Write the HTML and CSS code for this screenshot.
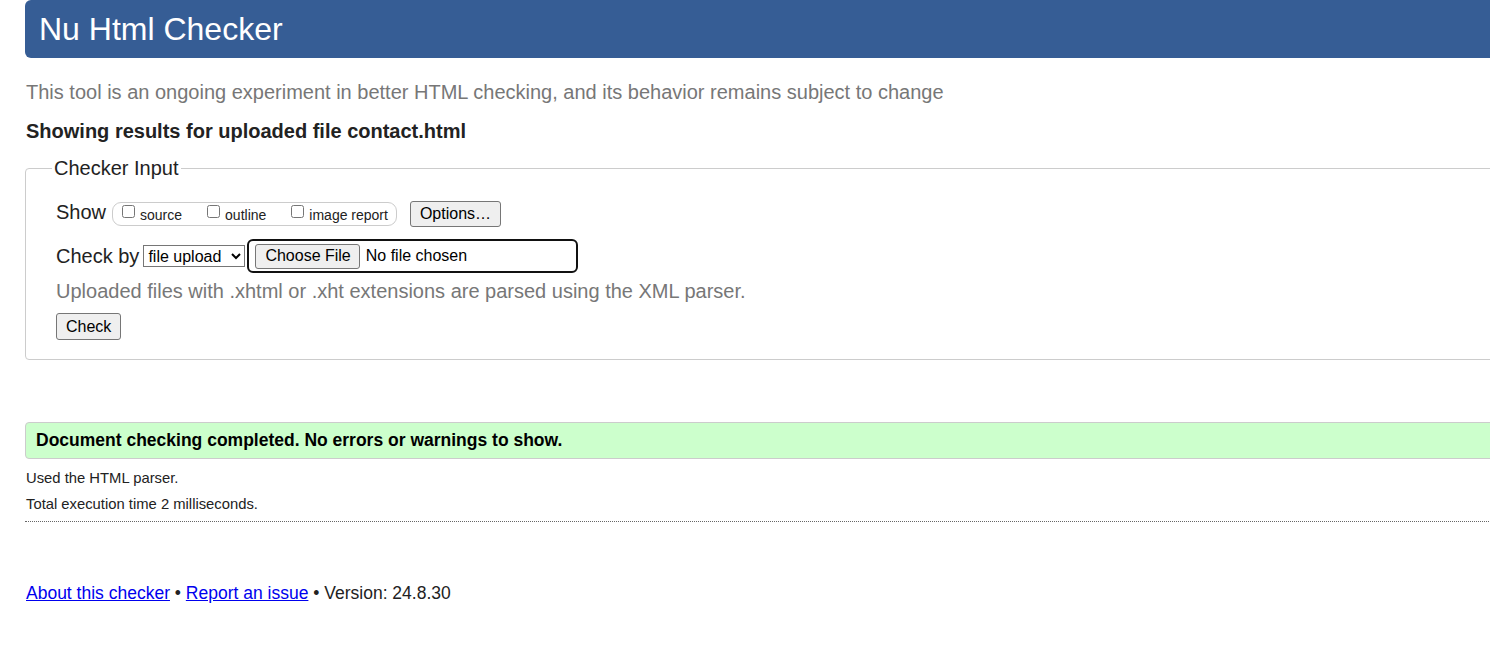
FILE: index.html
```html
<!DOCTYPE html>
<html lang="en">
<head>
<meta charset="utf-8">
<title>Nu Html Checker</title>
<link rel="stylesheet" href="styles.css">
</head>
<body>
<div class="page">
  <header class="masthead"><h1 class="masthead-title">Nu Html Checker</h1></header>
  <p class="intro">This tool is an ongoing experiment in better HTML checking, and its behavior remains subject to change</p>
  <p class="results-title">Showing results for uploaded file contact.html</p>
  <fieldset class="checker">
    <legend class="checker-legend">Checker Input</legend>
    <div class="row show-row">
      <span class="row-label">Show</span>
      <span class="show-group">
        <label class="opt"><input type="checkbox" class="cb">source</label>
        <label class="opt"><input type="checkbox" class="cb">outline</label>
        <label class="opt"><input type="checkbox" class="cb">image report</label>
      </span>
      <button class="btn btn-options" type="button">Options…</button>
    </div>
    <div class="row check-row">
      <span class="row-label">Check by</span>
      <select class="method"><option>file upload</option></select>
      <span class="file-box"><button class="btn btn-file" type="button">Choose File</button><span class="file-name">No file chosen</span></span>
    </div>
    <p class="hint">Uploaded files with .xhtml or .xht extensions are parsed using the XML parser.</p>
    <div class="row submit-row"><button class="btn btn-check" type="button">Check</button></div>
  </fieldset>
  <div class="success">Document checking completed. No errors or warnings to show.</div>
  <p class="details">Used the HTML parser.</p>
  <p class="details second">Total execution time 2 milliseconds.</p>
  <hr class="sep">
  <p class="footer"><a href="#">About this checker</a> • <a href="#">Report an issue</a> • Version: 24.8.30</p>
</div>
</body>
</html>
```
FILE: styles.css
```css
html, body {
  margin: 0;
  padding: 0;
  background: #fff;
  overflow: hidden;
}
body {
  font-family: "Liberation Sans", Arial, sans-serif;
  color: #222;
}
.page {
  margin-left: 25px;
  width: 1490px;
}
.masthead {
  height: 58px;
  background: #365d95;
  border-radius: 6px;
}
.masthead-title {
  margin: 0;
  padding-left: 14px;
  font-size: 32px;
  font-weight: normal;
  line-height: 58px;
  color: #fff;
}
.intro {
  margin: 22px 0 0 1px;
  font-size: 20px;
  line-height: 24px;
  color: #777;
}
.results-title {
  margin: 15px 0 0 1px;
  font-size: 20px;
  font-weight: bold;
  line-height: 24px;
  color: #222;
}
.checker {
  margin: 13px 0 0 0;
  padding: 21px 30px 19px 30px;
  border: 1px solid #ccc;
  border-radius: 4px;
  min-width: 0;
}
.checker-legend {
  margin-left: -4px;
  padding: 0 2px;
  font-size: 20px;
  line-height: 24px;
  color: #222;
}
.row {
  display: flex;
  align-items: center;
}
.row-label {
  font-size: 20px;
  line-height: 23px;
  color: #222;
}
.show-row {
  height: 26px;
  align-items: flex-start;
}
.show-group {
  margin: 1px 0 0 6px;
  height: 22px;
  display: inline-flex;
  align-items: baseline;
  padding: 0 8px 0 9px;
  border: 1px solid #ccc;
  border-radius: 9px;
  font-size: 14px;
  line-height: 24px;
}
.opt {
  display: inline-flex;
  align-items: baseline;
  margin-right: 25px;
  color: #222;
}
.opt:last-child {
  margin-right: 0;
}
.cb {
  margin: 0 5px 0 0;
  width: 13px;
  height: 13px;
  position: relative;
  top: -2px;
}
.btn {
  font-family: "Liberation Sans", Arial, sans-serif;
  font-size: 16px;
  color: #000;
  background: #efefef;
  border: 1px solid #767676;
  border-radius: 3px;
  padding: 0 9px;
  line-height: 18px;
}
.btn-options {
  margin-left: 13px;
  height: 26px;
}
.check-row {
  margin-top: 12px;
  height: 34px;
}
.method {
  margin-left: 4px;
  width: 102px;
  height: 22px;
  font-family: "Liberation Sans", Arial, sans-serif;
  font-size: 16px;
  color: #000;
  border: 1px solid #767676;
  border-radius: 0;
  background: #fff;
  padding: 0;
}
.file-box {
  margin-left: 2px;
  width: 327px;
  height: 30px;
  display: inline-flex;
  align-items: center;
  border: 2px solid #111;
  border-radius: 6px;
}
.btn-file {
  margin-left: 6px;
  height: 25px;
  padding: 0 8px 0 9px;
}
.file-name {
  margin-left: 6px;
  font-size: 16px;
  color: #000;
}
.hint {
  margin: 6px 0 0 0;
  font-size: 20px;
  line-height: 24px;
  color: #777;
}
.submit-row {
  margin-top: 10px;
}
.btn-check {
  height: 27px;
}
.success {
  margin-top: 62px;
  padding: 0 10px;
  height: 35px;
  line-height: 35px;
  border: 1px solid #ccc;
  border-radius: 4px;
  background: #ccffcc;
  font-size: 17.5px;
  font-weight: bold;
  color: #000;
}
.details {
  margin: 10px 0 0 1px;
  font-size: 14.8px;
  line-height: 18px;
  color: #222;
}
.details.second {
  margin-top: 8px;
}
.sep {
  margin: 8px 0 0 0;
  border: 0;
  border-top: 1px dotted #666;
  height: 0;
}
.footer {
  margin: 60px 0 0 1px;
  font-size: 17.5px;
  line-height: 22px;
  color: #222;
}
.footer a {
  color: #0000ee;
}
```
